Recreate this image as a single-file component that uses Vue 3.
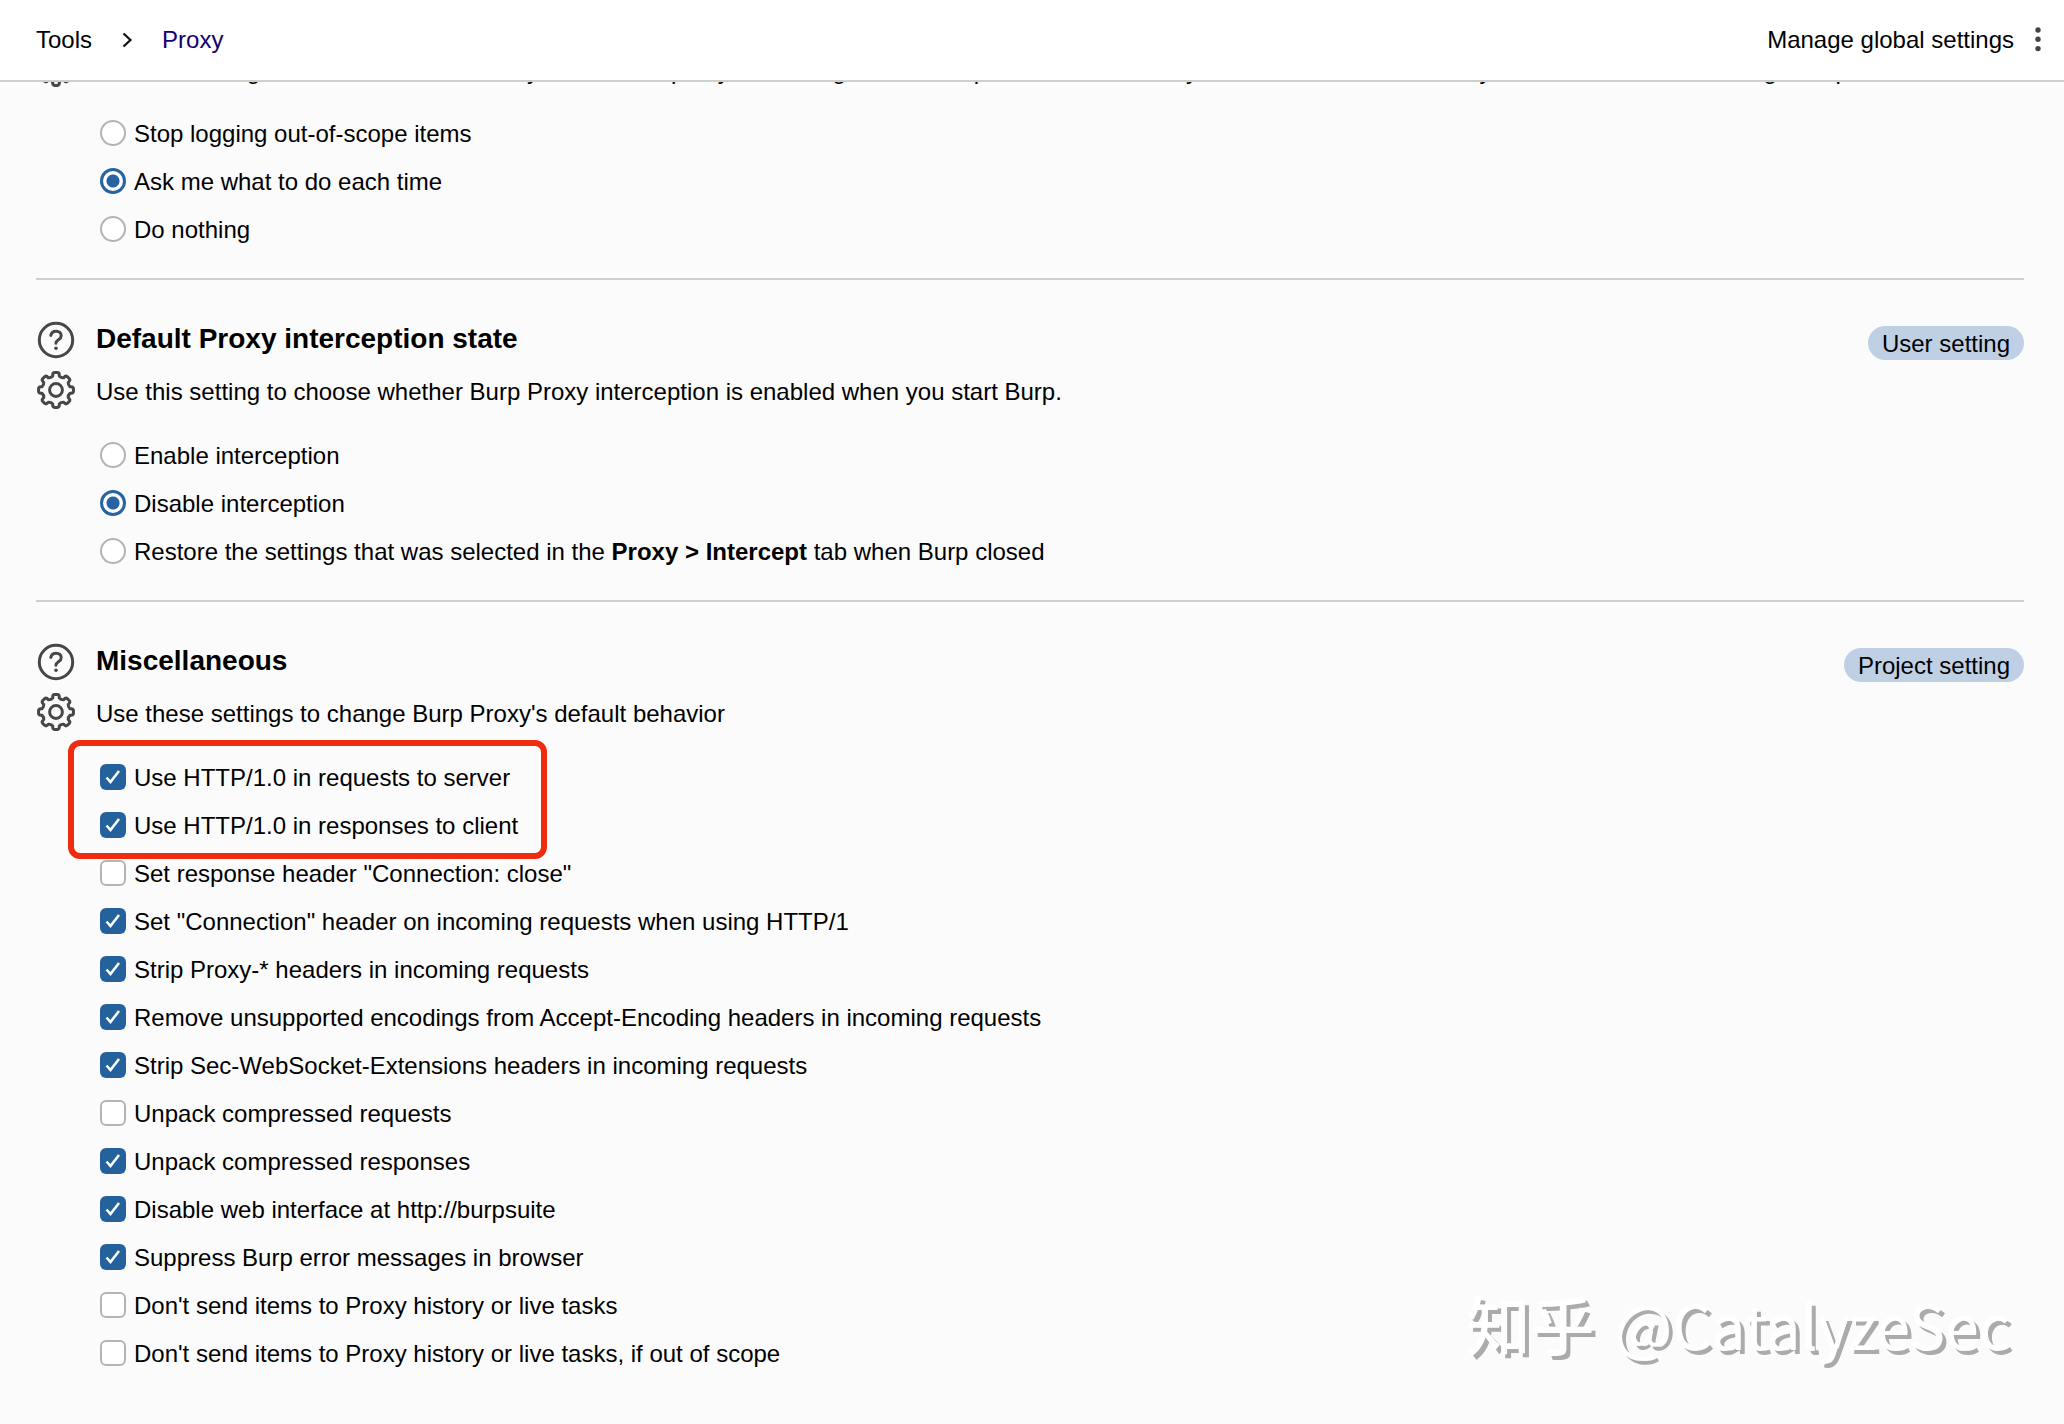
<template>
  <div class="settings">
    <header class="topbar">
      <nav class="topbar__crumbs" aria-label="Breadcrumb">
        <a href="#tools" class="topbar__link">Tools</a>
        <svg class="topbar__chevron" viewBox="0 0 12 16" aria-hidden="true">
          <path d="M2.5 1.5 9.5 8 2.5 14.5" />
        </svg>
        <a href="#proxy" class="topbar__link topbar__link--current">Proxy</a>
      </nav>
      <button type="button" class="topbar__manage">
        Manage global settings
        <svg class="topbar__dots" viewBox="0 0 6 26" aria-hidden="true">
          <circle cx="3" cy="3" r="2.7" />
          <circle cx="3" cy="12.3" r="2.7" />
          <circle cx="3" cy="21.6" r="2.7" />
        </svg>
      </button>
    </header>

    <main class="content">
      <section v-for="section in sections" :key="section.id" class="section">
        <div class="section__head" :class="{ 'section__head--scrolled': !section.title }">
          <div class="section__icons">
            <button v-if="section.title" type="button" class="icon-button" aria-label="Help">
              <svg viewBox="0 0 38 38">
                <circle cx="19" cy="19" r="16.7" />
                <path d="M13.8 14.4c.6-2.8 2.8-4.2 5.4-4.2 3 0 5 1.8 5 4.5 0 4.2-5.3 3.9-5.3 7.6" />
                <circle class="fill" cx="19" cy="27.2" r="1.8" />
              </svg>
            </button>
            <button type="button" class="icon-button" aria-label="Options">
              <svg viewBox="0 0 38 38">
                <path :d="gearPath" />
                <circle cx="19" cy="19" r="6.4" />
              </svg>
            </button>
          </div>
          <div class="section__text">
            <h2 v-if="section.title" class="section__title">{{ section.title }}</h2>
            <p class="section__desc">{{ section.desc }}</p>
          </div>
          <span v-if="section.scope" class="section__scope">{{ section.scope }}</span>
        </div>

        <div v-if="section.radios" class="options">
          <label v-for="(option, i) in section.radios" :key="i" class="option">
            <input v-model="section.value" type="radio" :name="section.id" :value="i" />
            <span class="option__label">{{ option[0] }}<b v-if="option[1]">{{ option[1] }}</b>{{ option[2] }}</span>
          </label>
        </div>

        <div v-else class="options">
          <label v-for="option in section.checks" :key="option.label" class="option">
            <input v-model="option.on" type="checkbox" />
            <span class="option__label">{{ option.label }}</span>
          </label>
          <div class="highlight" />
        </div>
      </section>
    </main>

    <div class="watermark">
      <span>知乎</span>
      <span class="watermark__name">@CatalyzeSec</span>
    </div>
  </div>
</template>

<script setup>
import { reactive } from "vue";

const sections = reactive([
  {
    id: "logging",
    desc: "Use this setting to control what is done by the internal proxy and its log when a scope is set for the entry or when the item is already a member of the matching set up.",
    value: 1,
    radios: [
      ["Stop logging out-of-scope items"],
      ["Ask me what to do each time"],
      ["Do nothing"],
    ],
  },
  {
    id: "interception",
    title: "Default Proxy interception state",
    desc: "Use this setting to choose whether Burp Proxy interception is enabled when you start Burp.",
    scope: "User setting",
    value: 1,
    radios: [
      ["Enable interception"],
      ["Disable interception"],
      [
        "Restore the settings that was selected in the ",
        "Proxy > Intercept",
        " tab when Burp closed",
      ],
    ],
  },
  {
    id: "misc",
    title: "Miscellaneous",
    desc: "Use these settings to change Burp Proxy's default behavior",
    scope: "Project setting",
    checks: [
      { label: "Use HTTP/1.0 in requests to server", on: true },
      { label: "Use HTTP/1.0 in responses to client", on: true },
      { label: 'Set response header "Connection: close"', on: false },
      { label: 'Set "Connection" header on incoming requests when using HTTP/1', on: true },
      { label: "Strip Proxy-* headers in incoming requests", on: true },
      { label: "Remove unsupported encodings from Accept-Encoding headers in incoming requests", on: true },
      { label: "Strip Sec-WebSocket-Extensions headers in incoming requests", on: true },
      { label: "Unpack compressed requests", on: false },
      { label: "Unpack compressed responses", on: true },
      { label: "Disable web interface at http://burpsuite", on: true },
      { label: "Suppress Burp error messages in browser", on: true },
      { label: "Don't send items to Proxy history or live tasks", on: false },
      { label: "Don't send items to Proxy history or live tasks, if out of scope", on: false },
    ],
  },
]);

// eight rounded teeth around the centre, joined by shallow curves
const point = (radius, deg) => {
  const a = (deg * Math.PI) / 180;
  return `${(19 + radius * Math.cos(a)).toFixed(2)} ${(19 + radius * Math.sin(a)).toFixed(2)}`;
};
const teeth = Array.from({ length: 8 }, (_, i) => {
  const c = i * 45;
  return [
    point(14.4, c - 13),
    `Q${point(17.5, c - 12)} ${point(17.5, c - 5)}`,
    `L${point(17.5, c + 5)}`,
    `Q${point(17.5, c + 12)} ${point(14.4, c + 13)}`,
    `Q${point(13, c + 22.5)} ${point(14.4, c + 32)}`,
  ].join(" ");
});
const gearPath = `M${teeth.join("L")}Z`;
</script>

<style>
body {
  background: #fbfbfb;
}
</style>

<style scoped>
.settings {
  position: relative;
  min-height: 100vh;
  font-family: "Liberation Sans", Arial, sans-serif;
  font-size: 24px;
  line-height: 32px;
  color: #000000;
  background: #fbfbfb;
}

.topbar {
  position: sticky;
  top: 0;
  z-index: 2;
  display: flex;
  align-items: center;
  justify-content: space-between;
  height: 80px;
  padding: 0 23px 0 36px;
  background: #ffffff;
  border-bottom: 2px solid #cfcfcf;
}

.topbar__crumbs {
  display: flex;
  align-items: center;
  gap: 29px;
}

.topbar__link {
  color: #000000;
  text-decoration: none;
}
.topbar__link--current { color: #14006e; }

.topbar__chevron {
  width: 12px;
  height: 16px;
  fill: none;
  stroke: #111111;
  stroke-width: 2.2;
}

.topbar__manage {
  display: flex;
  align-items: center;
  gap: 21px;
  padding: 0;
  border: 0;
  background: none;
  font: inherit;
  color: inherit;
}

.topbar__dots {
  width: 6px;
  height: 26px;
  fill: #444444;
}

.content {
  padding: 0 40px 0 36px;
}

.section {
  padding: 41px 0 25px;
  border-bottom: 2px solid #cfcfcf;
}
.section:first-child { padding-top: 0; }
.section:last-child { border-bottom: 0; }

.section__head {
  display: flex;
  align-items: flex-start;
  gap: 21px;
}

/* the first section sits partly under the top bar */
.section__head--scrolled {
  margin-top: -33px;
}
.section__head--scrolled .section__text {
  padding-top: 6px;
}

.section__icons {
  display: flex;
  flex-direction: column;
  gap: 12px;
  padding-left: 1px;
}

.icon-button {
  display: block;
  width: 38px;
  height: 38px;
  padding: 0;
  border: 0;
  background: none;
}

.icon-button svg {
  display: block;
  fill: none;
  stroke: #474747;
  stroke-width: 3;
  stroke-linecap: round;
  stroke-linejoin: round;
}

.icon-button .fill {
  fill: #474747;
  stroke: none;
}

.section__text {
  flex: 1;
  min-width: 0;
}

.section__title {
  margin: 0 0 19px;
  font-size: 28px;
  line-height: 36px;
  font-weight: 700;
}

.section__desc {
  margin: 0;
  white-space: nowrap;
}

.section__scope {
  margin-top: 5px;
  padding: 2px 14px 0;
  border-radius: 17px;
  background: #c0d0e4;
}

.options {
  position: relative;
  display: flex;
  flex-direction: column;
  align-items: flex-start;
  margin-top: 22px;
  padding-left: 64px;
}

.option {
  display: flex;
  align-items: center;
  gap: 8px;
  height: 48px;
}

.option__label {
  padding-top: 2px;
}

.option input {
  appearance: none;
  flex: none;
  width: 26px;
  height: 26px;
  margin: 0;
  border: 2px solid #b4b4b4;
  background: #ffffff;
}

.option input[type="radio"] {
  border-radius: 50%;
}
.option input[type="radio"]:checked {
  border: 3px solid #2763a0;
  background: radial-gradient(circle, #2763a0 6px, #ffffff 7px);
}

.option input[type="checkbox"] {
  border-radius: 6px;
}
.option input[type="checkbox"]:checked {
  border: 0;
  background: #25629d url("data:image/svg+xml,%3Csvg xmlns='http://www.w3.org/2000/svg' viewBox='0 0 26 26'%3E%3Cpath d='M6.5 13.5 10.5 18 19 7' fill='none' stroke='white' stroke-width='2.6'/%3E%3C/svg%3E");
}

.highlight {
  position: absolute;
  top: -13px;
  left: 32px;
  box-sizing: border-box;
  width: 479px;
  height: 119px;
  border: 6px solid #f02c10;
  border-radius: 12px;
  pointer-events: none;
}

.watermark {
  position: absolute;
  right: 54px;
  bottom: 56px;
  display: flex;
  align-items: baseline;
  gap: 20px;
  font-family: "Noto Sans CJK SC", sans-serif;
  font-size: 64px;
  font-weight: 500;
  line-height: 88px;
  color: #ffffff;
  text-shadow: 4px 4px 0 #ababab;
  white-space: nowrap;
}

.watermark__name {
  font-size: 61px;
  font-weight: 400;
}
</style>
